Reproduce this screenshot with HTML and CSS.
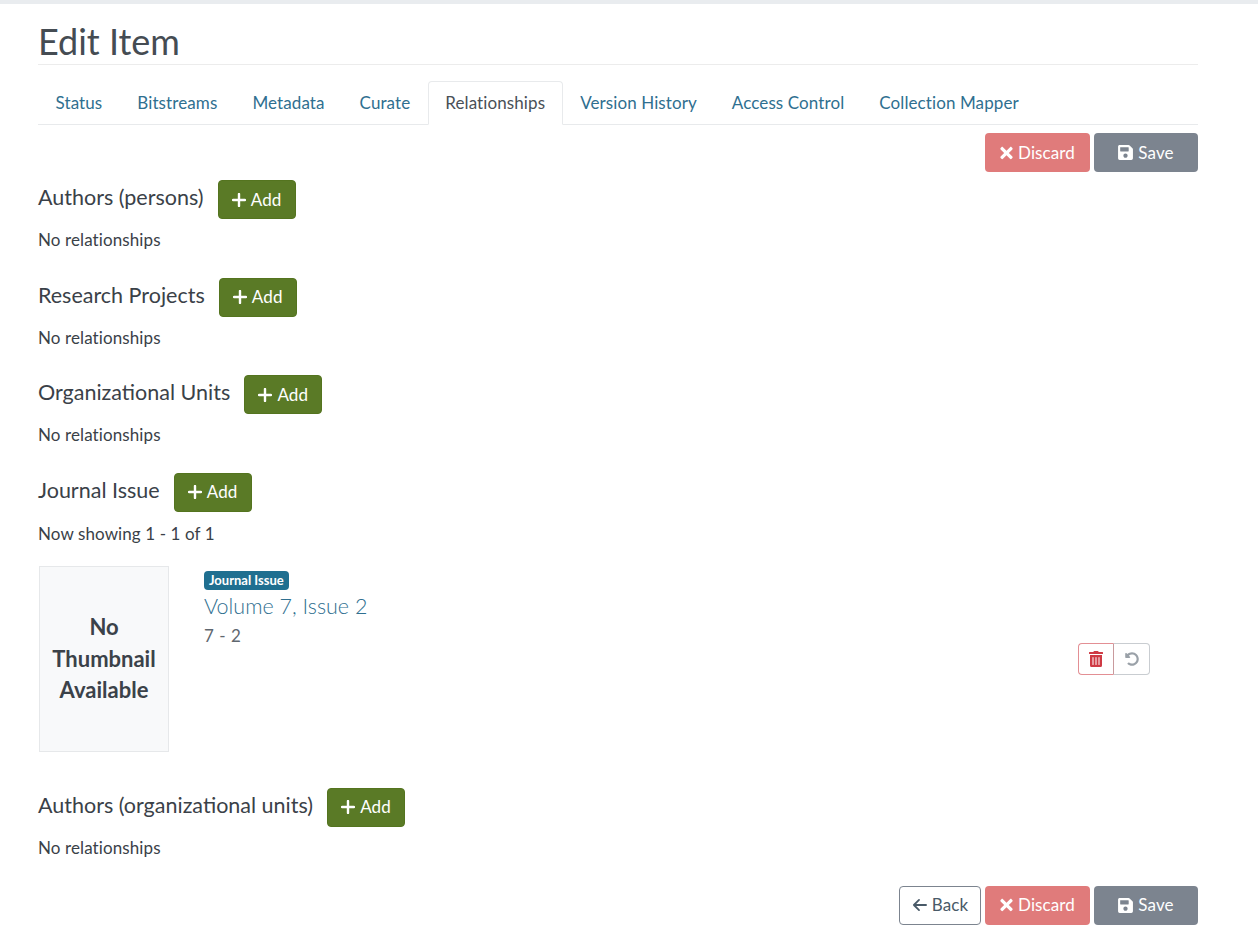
FILE: index.html
```html
<!DOCTYPE html>
<html lang="en">
<head>
<meta charset="utf-8">
<title>Edit Item</title>
<link rel="stylesheet" href="styles.css">
</head>
<body>
<svg class="defs" aria-hidden="true">
  <symbol id="i-plus" viewBox="0 0 14 14"><path d="M7 1v12M1 7h12" fill="none" stroke="currentColor" stroke-width="2.4" stroke-linecap="round"/></symbol>
  <symbol id="i-times" viewBox="0 0 352 512"><path fill="currentColor" d="M242.72 256l100.07-100.07c12.28-12.28 12.28-32.19 0-44.48l-22.24-22.24c-12.28-12.28-32.19-12.28-44.48 0L176 189.28 75.93 89.21c-12.28-12.28-32.19-12.28-44.48 0L9.21 111.45c-12.28 12.28-12.28 32.19 0 44.48L109.28 256 9.21 356.07c-12.28 12.28-12.28 32.19 0 44.48l22.24 22.24c12.28 12.28 32.2 12.28 44.48 0L176 322.72l100.07 100.07c12.28 12.28 32.2 12.28 44.48 0l22.24-22.24c12.28-12.28 12.28-32.19 0-44.48L242.72 256z"/></symbol>
  <symbol id="i-save" viewBox="0 0 448 512"><path fill="currentColor" d="M433.941 129.941l-83.882-83.882A48 48 0 0 0 316.118 32H48C21.49 32 0 53.49 0 80v352c0 26.51 21.49 48 48 48h352c26.51 0 48-21.49 48-48V163.882a48 48 0 0 0-14.059-33.941zM224 416c-35.346 0-64-28.654-64-64 0-35.346 28.654-64 64-64s64 28.654 64 64c0 35.346-28.654 64-64 64zm96-304.52V212c0 6.627-5.373 12-12 12H76c-6.627 0-12-5.373-12-12V108c0-6.627 5.373-12 12-12h228.52c3.183 0 6.235 1.264 8.485 3.515l3.48 3.48A11.996 11.996 0 0 1 320 111.48z"/></symbol>
  <symbol id="i-trash" viewBox="0 0 448 512"><path fill="currentColor" d="M32 464a48 48 0 0 0 48 48h288a48 48 0 0 0 48-48V128H32zm272-256a16 16 0 0 1 32 0v224a16 16 0 0 1-32 0zm-96 0a16 16 0 0 1 32 0v224a16 16 0 0 1-32 0zm-96 0a16 16 0 0 1 32 0v224a16 16 0 0 1-32 0zM432 32H312l-9.4-18.7A24 24 0 0 0 281.1 0H166.8a23.72 23.72 0 0 0-21.4 13.3L136 32H16A16 16 0 0 0 0 48v32a16 16 0 0 0 16 16h416a16 16 0 0 0 16-16V48a16 16 0 0 0-16-16z"/></symbol>
  <symbol id="i-undo" viewBox="0 0 512 512"><path fill="currentColor" d="M255.545 8c-66.269.119-126.438 26.233-170.86 68.685L48.971 40.971C33.851 25.851 8 36.559 8 57.941V192c0 13.255 10.745 24 24 24h134.059c21.382 0 32.09-25.851 16.971-40.971l-41.75-41.75c30.864-28.899 70.801-44.907 113.23-45.273 92.398-.798 170.283 73.977 169.484 169.442C423.236 348.009 349.816 424 256 424c-41.127 0-79.997-14.678-110.63-41.556-4.743-4.161-11.906-3.908-16.368.553L89.34 422.659c-4.872 4.872-4.631 12.815.482 17.433C133.798 479.813 192.074 504 256 504c136.966 0 247.999-111.033 248-247.998C504.001 119.193 392.354 7.755 255.545 8z"/></symbol>
  <symbol id="i-left" viewBox="0 0 16 14"><path d="M15 7H2M7.5 1.5L2 7l5.5 5.5" fill="none" stroke="currentColor" stroke-width="1.9" stroke-linecap="round" stroke-linejoin="round"/></symbol>
</svg>
<div class="topbar"></div>
<main class="page">
  <h1 class="title">Edit Item</h1>
  <nav class="tabs">
    <a class="tab">Status</a>
    <a class="tab">Bitstreams</a>
    <a class="tab">Metadata</a>
    <a class="tab">Curate</a>
    <a class="tab active">Relationships</a>
    <a class="tab">Version History</a>
    <a class="tab">Access Control</a>
    <a class="tab">Collection Mapper</a>
  </nav>
  <div class="actions top">
    <button class="btn danger"><svg class="ico ico-x"><use href="#i-times"/></svg>Discard</button>
    <button class="btn secondary"><svg class="ico ico-s"><use href="#i-save"/></svg>Save</button>
  </div>

  <section class="rel">
    <div class="rel-head"><h2>Authors (persons)</h2><button class="btn add"><svg class="ico ico-p"><use href="#i-plus"/></svg>Add</button></div>
    <p class="note">No relationships</p>
  </section>
  <section class="rel">
    <div class="rel-head"><h2>Research Projects</h2><button class="btn add"><svg class="ico ico-p"><use href="#i-plus"/></svg>Add</button></div>
    <p class="note">No relationships</p>
  </section>
  <section class="rel">
    <div class="rel-head"><h2>Organizational Units</h2><button class="btn add"><svg class="ico ico-p"><use href="#i-plus"/></svg>Add</button></div>
    <p class="note">No relationships</p>
  </section>
  <section class="rel">
    <div class="rel-head"><h2>Journal Issue</h2><button class="btn add"><svg class="ico ico-p"><use href="#i-plus"/></svg>Add</button></div>
    <p class="note note-count">Now showing 1 - 1 of 1</p>
    <div class="item">
      <div class="thumb">No Thumbnail Available</div>
      <div class="item-body">
        <span class="badge">Journal Issue</span>
        <a class="item-title">Volume 7, Issue 2</a>
        <span class="item-sub">7 - 2</span>
      </div>
      <div class="item-actions">
        <button class="mini mini-del"><svg class="ico-t"><use href="#i-trash"/></svg></button>
        <button class="mini mini-undo"><svg class="ico-t"><use href="#i-undo"/></svg></button>
      </div>
    </div>
  </section>
  <section class="rel">
    <div class="rel-head"><h2>Authors (organizational units)</h2><button class="btn add"><svg class="ico ico-p"><use href="#i-plus"/></svg>Add</button></div>
    <p class="note">No relationships</p>
  </section>

  <div class="actions bottom">
    <button class="btn outline"><svg class="ico ico-l"><use href="#i-left"/></svg>Back</button>
    <button class="btn danger"><svg class="ico ico-x"><use href="#i-times"/></svg>Discard</button>
    <button class="btn secondary"><svg class="ico ico-s"><use href="#i-save"/></svg>Save</button>
  </div>
</main>
</body>
</html>
```
FILE: styles.css
```css
* { box-sizing: border-box; }
html, body { margin: 0; padding: 0; }
body {
  background: #fff;
  color: #3a4148;
  font-family: "Lato", "Noto Sans", sans-serif;
  font-size: 17px;
  letter-spacing: 0.1px;
  line-height: 24px;
  height: 935px;
  overflow: hidden;
}
.defs { position: absolute; width: 0; height: 0; }
.topbar { height: 4px; background: #e9ecef; }
.page { width: 1160px; margin-left: 38px; }
.title {
  margin: 0;
  height: 61px;
  padding-top: 15px;
  border-bottom: 1px solid #ececec;
  font-size: 36px;
  line-height: 44px;
  font-weight: 400;
  letter-spacing: 0;
  color: #454c53;
}
.tabs {
  display: flex;
  margin-top: 16px;
  height: 44px;
  border-bottom: 1px solid #e8eaec;
}
.tab {
  display: block;
  height: 44px;
  padding: 9px 16.5px;
  color: #2f6f90;
  border: 1px solid transparent;
  border-radius: 4px 4px 0 0;
}
.tab.active {
  color: #495057;
  background: #fff;
  border-color: #e8eaec #e8eaec #fff;
}
.actions { display: flex; justify-content: flex-end; gap: 4px; }
.actions.top { margin-top: 8px; margin-bottom: 8px; }
.actions.bottom { margin-top: 26px; }
.btn {
  display: inline-flex;
  align-items: center;
  justify-content: center;
  height: 39px;
  padding: 0 12px;
  border: 1px solid transparent;
  border-radius: 4px;
  font: inherit;
  letter-spacing: 0.1px;
  color: #fff;
  white-space: nowrap;
}
.danger { width: 105px; background: #e07b7b; }
.secondary { width: 104px; background: #7c848f; }
.outline { width: 82px; background: #fff; border-color: #7c848f; color: #495a68; }
.add { width: 78px; margin-left: 14px; background: #5a7a26; border-color: #54741f; }
.ico { flex: none; margin-right: 5px; }
.ico-p { width: 14px; height: 14px; margin-right: 5px; }
.ico-x { width: 13px; height: 18px; }
.ico-s { width: 15px; height: 17px; margin-right: 5px; }
.ico-l { width: 15px; height: 14px; margin-right: 5px; }
.rel { margin-bottom: 25.5px; }
.rel-head { display: flex; align-items: center; height: 39px; margin-bottom: 9px; }
.rel-head h2 {
  margin: 0 0 5px;
  font-size: 21.5px;
  line-height: 24px;
  font-weight: 400;
  letter-spacing: 0;
  color: #3a4148;
}
.note { margin: 0; }
.note-count { padding-top: 1px; margin-bottom: -1px; }
.item {
  display: flex;
  align-items: center;
  margin-top: 21px;
  margin-bottom: 36px;
}
.thumb {
  flex: none;
  width: 130px;
  height: 186px;
  margin-left: 1px;
  display: flex;
  align-items: center;
  justify-content: center;
  text-align: center;
  padding: 0 7px;
  background: #f8f9fa;
  border: 1px solid #e6e8ea;
  font-size: 22px;
  line-height: 31.5px;
  letter-spacing: 0;
  font-weight: 700;
  color: #3b4249;
}
.item-body {
  flex: 1;
  align-self: flex-start;
  display: flex;
  flex-direction: column;
  align-items: flex-start;
  padding: 5px 0 0 35px;
}
.badge {
  display: block;
  height: 19px;
  padding: 0 5px;
  border-radius: 4px;
  background: #1f6f90;
  color: #fff;
  font-size: 13px;
  line-height: 19px;
  font-weight: 700;
  letter-spacing: 0;
}
.item-title {
  margin-top: 2px;
  font-size: 21.5px;
  line-height: 28px;
  font-weight: 300;
  letter-spacing: 0;
  color: #2f6f90;
}
.item-sub { margin-top: 2px; color: #5f676f; line-height: 28px; letter-spacing: 0.5px; }
.item-actions { display: flex; flex: none; margin-right: 48px; }
.mini {
  display: flex;
  align-items: center;
  justify-content: center;
  width: 36px;
  height: 32px;
  padding: 0;
  background: #fff;
  border: 1px solid;
}
.mini-del { color: #cf3a44; border-color: #e38f94 #c99a9d #e38f94 #e38f94; border-radius: 4px 0 0 4px; }
.mini-undo { color: #9aa1a8; border-color: #c9cdd1; border-left: 0; border-radius: 0 4px 4px 0; }
.ico-t { width: 14px; height: 16px; }
```
